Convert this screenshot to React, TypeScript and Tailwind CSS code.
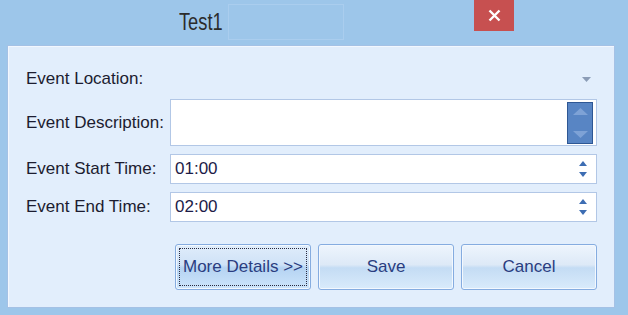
import React from 'react';

const font = { fontFamily: '"Liberation Sans", Arial, sans-serif' };

const SpinArrows: React.FC = () => (
  <div className="flex flex-col items-center gap-[6px] mr-[9px]">
    <svg width="8" height="5" viewBox="0 0 8 5"><path d="M0 5 L4 0 L8 5 Z" fill="#3d6db3" /></svg>
    <svg width="8" height="5" viewBox="0 0 8 5"><path d="M0 0 L4 5 L8 0 Z" fill="#3d6db3" /></svg>
  </div>
);

const Button: React.FC<{ label: string; focused?: boolean }> = ({ label, focused }) => (
  <button
    className={`w-[136px] h-[46px] rounded-[3px] border border-[#85ace0] shadow-[inset_0_0_0_1px_#f3f8fe] flex items-center justify-center text-[17px] text-[#2a3d80] p-[3px] ${
      focused
        ? 'bg-[linear-gradient(to_bottom,#e0edfb_0%,#cfe2f7_45%,#b5d3f2_52%,#cde5fb_100%)]'
        : 'bg-[linear-gradient(to_bottom,#eef5fd_0%,#dde9f7_45%,#c4dcf4_52%,#d9ebfb_100%)]'
    }`}
    style={font}
  >
    <span
      className={`w-full h-full flex items-center justify-center ${
        focused ? 'border border-dotted border-[#2a2a40]' : ''
      }`}
    >
      {label}
    </span>
  </button>
);

const Row: React.FC<{ label: string; children: React.ReactNode; className?: string }> = ({
  label,
  children,
  className,
}) => (
  <div className={`flex items-center ${className ?? ''}`}>
    <div className="w-[144px] text-[17px] text-[#1c1c30]">{label}</div>
    {children}
  </div>
);

export default function App() {
  return (
    <div className="w-[628px] h-[315px] bg-[#9dc6ea] overflow-hidden" style={font}>
      {/* title bar */}
      <div className="h-[45px] flex items-start">
        <div className="ml-[179px] mt-[9px] text-[24px] text-[#2b2b2b] inline-block origin-left scale-x-[0.76] w-[44px] leading-[26px]">
          Test1
        </div>
        <div className="ml-[5px] mt-[4px] w-[116px] h-[36px] border border-[#aacdee]" />
        <div className="ml-auto mr-[114px] w-[40px] h-[31px] bg-[#c75050] flex items-center justify-center">
          <svg width="13" height="13" viewBox="0 0 13 13">
            <path d="M1.5 1.5 L11.5 11.5 M11.5 1.5 L1.5 11.5" stroke="#fff" strokeWidth="2.4" />
          </svg>
        </div>
      </div>

      {/* body panel */}
      <div className="ml-[7px] w-[608px] h-[263px] border border-[#a4c1e5] bg-[#e2eefc] shadow-[inset_1px_1px_0_#f2f7fe] pl-[18px] pr-[17px] pt-[18px]">
        <Row label="Event Location:" className="h-[30px]">
          <div className="flex-1 flex justify-end pr-[6px]">
            <svg width="9" height="5" viewBox="0 0 9 5"><path d="M0 0 L4.5 5 L9 0 Z" fill="#8b9cb6" /></svg>
          </div>
        </Row>

        <Row label="Event Description:" className="mt-[5px] h-[47px]">
          <div className="flex-1 h-full bg-white border border-[#b2c7e6] flex justify-end items-center pr-[3px]">
            <div className="w-[26px] h-[42px] bg-[#5885c4] border border-[#2e5794] flex flex-col items-center justify-between py-[5px]">
              <svg width="15" height="7" viewBox="0 0 15 7"><path d="M0 7 L7.5 0 L15 7 Z" fill="#7ea2d6" /></svg>
              <svg width="15" height="7" viewBox="0 0 15 7"><path d="M0 0 L7.5 7 L15 0 Z" fill="#7ea2d6" /></svg>
            </div>
          </div>
        </Row>

        <Row label="Event Start Time:" className="mt-[8px] h-[30px]">
          <div className="flex-1 h-full bg-white border border-[#b2c7e6] flex items-center justify-between pl-[4px]">
            <span className="text-[17px] text-[#1c1c48]">01:00</span>
            <SpinArrows />
          </div>
        </Row>

        <Row label="Event End Time:" className="mt-[8px] h-[30px]">
          <div className="flex-1 h-full bg-white border border-[#b2c7e6] flex items-center justify-between pl-[4px]">
            <span className="text-[17px] text-[#1c1c48]">02:00</span>
            <SpinArrows />
          </div>
        </Row>

        <div className="mt-[22px] flex justify-end gap-[7px]">
          <Button label="More Details >>" focused />
          <Button label="Save" />
          <Button label="Cancel" />
        </div>
      </div>
    </div>
  );
}
